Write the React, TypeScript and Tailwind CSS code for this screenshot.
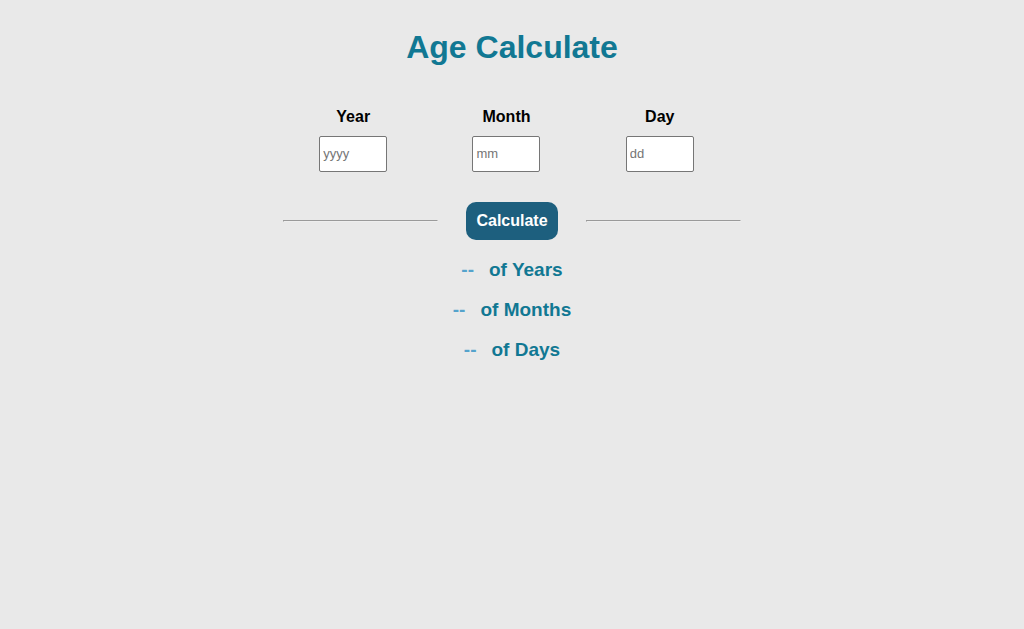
import { useState, type FormEvent } from "react";

const fields = [
  { id: "year", label: "Year", hint: "yyyy" },
  { id: "month", label: "Month", hint: "mm" },
  { id: "day", label: "Day", hint: "dd" },
];

const units = ["Years", "Months", "Days"];

function ageFrom(birth: Date, today: Date): number[] {
  let years = today.getFullYear() - birth.getFullYear();
  let months = today.getMonth() - birth.getMonth();
  let days = today.getDate() - birth.getDate();
  if (days < 0) {
    months -= 1;
    days += new Date(today.getFullYear(), today.getMonth(), 0).getDate();
  }
  if (months < 0) {
    years -= 1;
    months += 12;
  }
  return [years, months, days];
}

function Rule() {
  return <hr className="h-0.5 flex-1 border border-t-[#9a9a9a] border-r-[#eeeeee] border-b-[#eeeeee] border-l-[#9a9a9a]" />;
}

export default function App() {
  const [result, setResult] = useState<number[] | null>(null);

  function calculate(event: FormEvent<HTMLFormElement>) {
    event.preventDefault();
    const data = new FormData(event.currentTarget);
    const [year, month, day] = fields.map((field) => Number(data.get(field.id)));
    if (year && month && day) {
      setResult(ageFrom(new Date(year, month - 1, day), new Date()));
    }
  }

  return (
    <main className="min-h-screen bg-[#e9e9e9] pt-[29px] text-center font-['Liberation_Sans',Arial,sans-serif] font-bold">
      <h1 className="text-[32px] leading-9 text-[#117893]">Age Calculate</h1>

      <form onSubmit={calculate} className="mx-auto mt-10 w-[45%]">
        <div className="-ml-[5px] mr-[6px] grid grid-cols-3">
          {fields.map((field) => (
            <div key={field.id} className="flex flex-col items-center">
              <label htmlFor={field.id} className="text-base">
                {field.label}
              </label>
              <input
                id={field.id}
                name={field.id}
                inputMode="numeric"
                placeholder={field.hint}
                className="mt-[7px] h-9 w-[68px] rounded-[2px] border border-[#767676] bg-white px-[3px] pb-0.5 text-[13px] font-normal placeholder:text-[#757575]"
              />
            </div>
          ))}
        </div>

        <div className="mt-[30px] flex items-center justify-center gap-7 px-px">
          <Rule />
          <button type="submit" className="h-[38px] w-[92px] rounded-[10px] bg-[#1d5f7e] text-base text-white">
            Calculate
          </button>
          <Rule />
        </div>
      </form>

      <div className="mt-[19px] flex flex-col gap-[18px] text-[19px] leading-[22px] text-[#117893]">
        {units.map((unit, i) => (
          <p key={unit} className="flex justify-center gap-[15px]">
            <span className="text-[#55a3cc]">{result ? result[i] : "--"}</span>
            <span>of {unit}</span>
          </p>
        ))}
      </div>
    </main>
  );
}
